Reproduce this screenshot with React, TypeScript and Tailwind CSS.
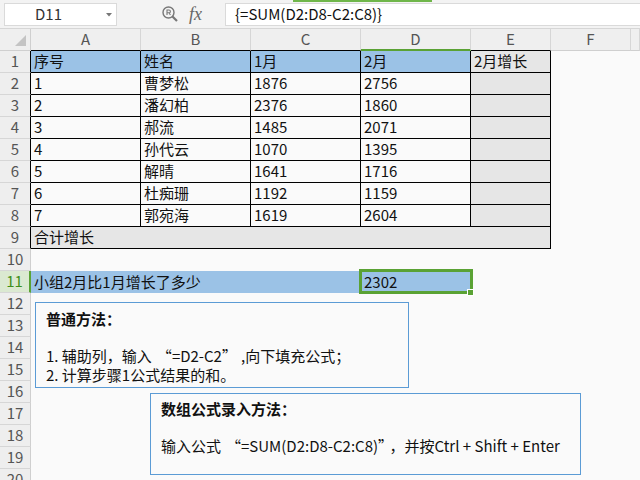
import React from 'react'

const FONT = '"Noto Sans CJK SC", "Noto Sans", sans-serif'

const colLetters = ['A', 'B', 'C', 'D', 'E', 'F', '']

const tableRows = [
  ['1', '曹梦松', '1876', '2756'],
  ['2', '潘幻柏', '2376', '1860'],
  ['3', '郝流', '1485', '2071'],
  ['4', '孙代云', '1070', '1395'],
  ['5', '解晴', '1641', '1716'],
  ['6', '杜痴珊', '1192', '1159'],
  ['7', '郭宛海', '1619', '2604'],
]

const RowHead = ({n, dark, active}: {n: number; dark?: boolean; active?: boolean}) => (
  <div
    className={
      'flex h-[22px] items-center justify-center border-b border-b-[#d6d6d6] text-[15px] ' +
      (active
        ? 'border-r-2 border-r-[#5aa234] bg-[#dbe9d1] text-[#3e8f1c]'
        : dark
          ? 'border-r border-r-black bg-[#eeeeee] text-[#555]'
          : 'border-r border-r-[#cfcfcf] bg-[#eeeeee] text-[#555]')
    }
  >
    {n}
  </div>
)

const Cell = ({
  children,
  className = '',
}: {
  children?: React.ReactNode
  className?: string
}) => (
  <div className={'flex h-[22px] items-center overflow-hidden whitespace-nowrap pl-[3px] text-[15px] text-[#111] ' + className}>
    {children}
  </div>
)

// full-width quote marks, spaced as the reference font draws them
const LQ = () => <span className="pl-[5px]">“</span>
const RQ = () => <span className="pr-[4px]">”</span>

const FormulaBar = () => (
  <div className="flex h-[29px] items-center border-b border-[#d6d6d6] bg-[#f3f3f3]">
    <div className="relative ml-[4px] flex h-[23px] w-[113px] items-center border border-[#dadada] bg-white pl-[30px] text-[15px] text-[#333]">
      D11
      <svg className="absolute right-[4px] top-[9px]" width="6" height="4" viewBox="0 0 6 4">
        <path d="M0 0H6L3 3.5Z" fill="#777" />
      </svg>
    </div>
    <div className="flex w-[108px] items-center pl-[44px]">
      <svg width="18" height="18" viewBox="0 0 18 18" fill="none" stroke="#777" strokeWidth="1.4">
        <circle cx="7.5" cy="7.5" r="5.5" />
        <path d="M11.5 11.5L16 16" strokeWidth="2.2" />
        <path d="M6 10V5H8A1.4 1.4 0 0 1 8 7.8H6M8 7.8L9.4 10" strokeWidth="1.1" />
      </svg>
      <span
        className="ml-[10px] text-[18px] italic text-[#666]"
        style={{fontFamily: '"Liberation Serif", serif'}}
      >
        fx
      </span>
    </div>
    <div className="flex h-[23px] flex-1 items-center border border-r-0 border-[#dadada] bg-white pl-[9px] text-[15px] text-[#111]">
      {'{=SUM(D2:D8-C2:C8)}'}
    </div>
  </div>
)

export default function App() {
  const headBase = 'flex h-[22px] items-center justify-center bg-[#efefef] text-[15px] text-[#555]'
  const tb = 'border-r border-b border-black'
  return (
    <div
      className="relative h-[480px] w-[640px] overflow-hidden bg-[#fafafa]"
      style={{fontFamily: FONT}}
    >
      <div className="absolute left-[293px] top-0 h-[2px] w-[139px] bg-[#6fb64a]" />
      <FormulaBar />
      <div className="grid grid-cols-[31px_110px_110px_110px_110px_80px_80px_9px]">
        {/* column header */}
        <div className="relative h-[22px] border-r border-b border-[#cfcfcf] bg-[#efefef]">
          <svg className="absolute left-[15px] top-[6px]" width="11" height="11" viewBox="0 0 11 11">
            <path d="M11 0V11H0Z" fill="#c4c4c4" />
          </svg>
        </div>
        {colLetters.map((c, i) => (
          <div
            key={i}
            className={
              headBase +
              ' border-r border-r-[#d6d6d6] ' +
              (c === 'D'
                ? 'border-b-2 border-b-[#5aa234] bg-[#d9e9cf] text-[#3e8f1c]'
                : c === 'F' || c === ''
                  ? 'border-b border-b-[#cfcfcf]'
                  : 'border-b border-b-black')
            }
          >
            {c}
          </div>
        ))}

        {/* row 1 */}
        <RowHead n={1} dark />
        <Cell className={tb + ' bg-[#9bc2e6]'}>序号</Cell>
        <Cell className={tb + ' bg-[#9bc2e6]'}>姓名</Cell>
        <Cell className={tb + ' bg-[#9bc2e6]'}>1月</Cell>
        <Cell className={tb + ' bg-[#9bc2e6]'}>2月</Cell>
        <Cell className={tb + ' bg-[#e6e6e6]'}>2月增长</Cell>
        <Cell />
        <Cell />

        {tableRows.map((r, i) => (
          <React.Fragment key={i}>
            <RowHead n={i + 2} dark />
            {r.map((v, j) => (
              <Cell key={j} className={tb + ' bg-[#fafafa]'}>
                {v}
              </Cell>
            ))}
            <Cell className={tb + ' bg-[#e6e6e6]'} />
            <Cell />
            <Cell />
          </React.Fragment>
        ))}

        {/* row 9 */}
        <RowHead n={9} dark />
        <Cell className={tb + ' col-span-5 bg-[#e6e6e6]'}>合计增长</Cell>
        <Cell />
        <Cell />

        {/* row 10 */}
        <RowHead n={10} />
        <div className="col-span-7" />

        {/* row 11 */}
        <RowHead n={11} active />
        <Cell className="col-span-3 bg-[#9bc2e6]">小组2月比1月增长了多少</Cell>
        <div className="relative">
          <Cell className="bg-[#9bc2e6] pl-[2px]">2302</Cell>
          <div className="absolute -bottom-[1px] -left-[2px] -right-[2px] -top-[2px] border-[3px] border-[#5aa234]" />
          <div className="absolute -bottom-[3px] -right-[3px] h-[7px] w-[7px] border border-white bg-[#5aa234]" />
        </div>
        <div className="col-span-3" />

        {[12, 13, 14, 15, 16, 17, 18, 19, 20].map((n) => (
          <React.Fragment key={n}>
            <RowHead n={n} />
            <div className="col-span-7" />
          </React.Fragment>
        ))}
      </div>

      {/* text boxes */}
      <div className="absolute left-[35px] top-[302px] h-[86px] w-[374px] border border-[#5b9bd5] bg-[#fafafa] pl-[10px] pt-[6px] text-[15px] leading-[19px] text-[#111]">
        <div className="font-bold">普通方法：</div>
        <div className="h-[18px]" />
        <div>
          1. 辅助列，输入<LQ />=D2-C2<RQ />,向下填充公式；
        </div>
        <div>2. 计算步骤1公式结果的和。</div>
      </div>
      <div className="absolute left-[150px] top-[393px] h-[82px] w-[431px] border border-[#5b9bd5] bg-[#fafafa] pl-[10px] pt-[5px] text-[15px] leading-[19px] text-[#111]">
        <div className="font-bold">数组公式录入方法：</div>
        <div className="h-[18px]" />
        <div>
          输入公式<LQ />=SUM(D2:D8-C2:C8)<RQ />，并按Ctrl + Shift + Enter
        </div>
      </div>
    </div>
  )
}
